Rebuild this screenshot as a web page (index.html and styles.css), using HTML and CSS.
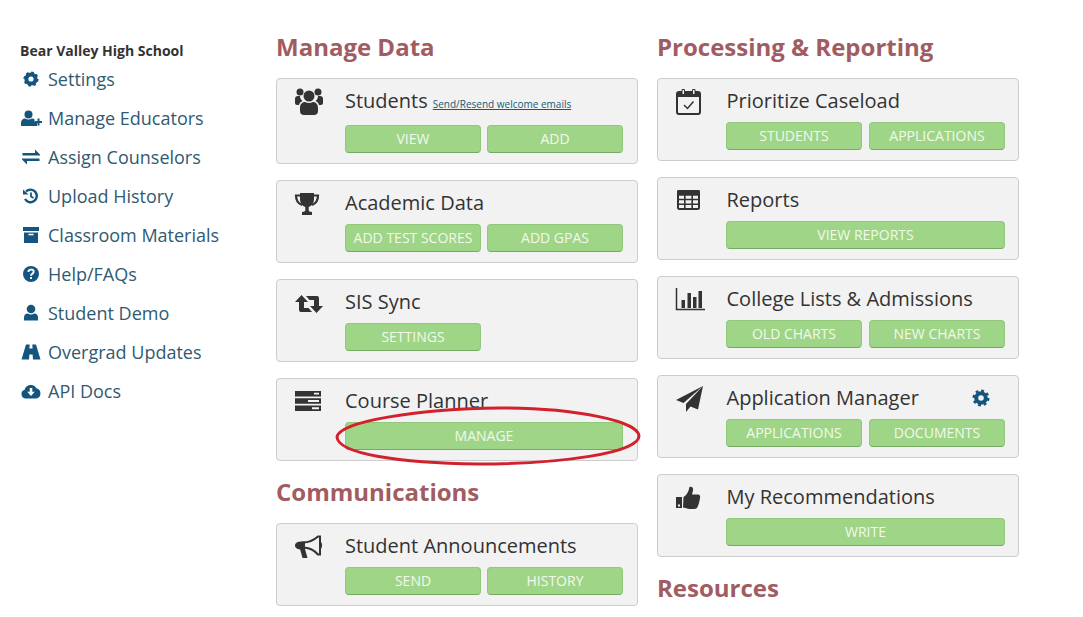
FILE: index.html
```html
<!DOCTYPE html>
<html lang="en">
<head>
  <meta charset="UTF-8">
  <title>Bear Valley High School</title>
  <link rel="stylesheet" href="styles.css">
</head>
<body>

  <div class="page">

    <div class="sidebar">
      <div class="school">Bear Valley High School</div>

      <a class="nav-item" href="#">
        <svg class="nav-icon" viewBox="0 0 22 20"><circle cx="11" cy="10" r="4.6" fill="none" stroke="currentColor" stroke-width="4"/><circle cx="11" cy="10" r="6.6" fill="none" stroke="currentColor" stroke-width="2" stroke-dasharray="2.6 2.58"/></svg>
        Settings
      </a>
      <a class="nav-item" href="#">
        <svg class="nav-icon" viewBox="0 0 22 20"><circle cx="8.5" cy="6.5" r="4"/><path d="M1 18v-3c0-3 2-4.500 4-4.500 2 1.300 5 1.300 7 0 1 0 2 .4 2.600 1v2.500h2.400V18z"/><path d="M15 14h7M18.500 10.500v7" fill="none" stroke="currentColor" stroke-width="2"/></svg>
        Manage Educators
      </a>
      <a class="nav-item" href="#">
        <svg class="nav-icon" viewBox="0 0 22 20"><path d="M2.500 6h12.500V2.500L20 7.500v1H2.500zM19.500 11.500v2.500H7v3.500L2 12.500v-1z"/></svg>
        Assign Counselors
      </a>
      <a class="nav-item" href="#">
        <svg class="nav-icon" viewBox="0 0 22 20"><path d="M6 5.500A6.300 6.300 0 1 1 5 13" fill="none" stroke="currentColor" stroke-width="2.400"/><path d="M3 3.500l5.500 5H3z"/><path d="M11 6.500v4l2.500 1.500" fill="none" stroke="currentColor" stroke-width="1.800"/></svg>
        Upload History
      </a>
      <a class="nav-item" href="#">
        <svg class="nav-icon" viewBox="0 0 22 20"><path d="M3 2h16v4H3zM4 7.500h14V18H4z"/><path d="M8.500 9.500h5" stroke="#fff" stroke-width="1.600"/></svg>
        Classroom Materials
      </a>
      <a class="nav-item" href="#">
        <svg class="nav-icon" viewBox="0 0 22 20"><circle cx="11" cy="10" r="8"/><path d="M8.300 8c.2-3.200 5.400-3.200 5.400-.2 0 2-2.700 2-2.700 4" fill="none" stroke="#fff" stroke-width="1.900"/><path d="M10 13h2v2h-2z" fill="#fff"/></svg>
        Help/FAQs
      </a>
      <a class="nav-item" href="#">
        <svg class="nav-icon" viewBox="0 0 22 20"><circle cx="11" cy="6" r="4.300"/><path d="M4 17.500v-3c0-2.500 1.700-4 3.700-4 2 1.300 4.600 1.300 6.600 0 2 0 3.700 1.500 3.700 4v3z"/></svg>
        Student Demo
      </a>
      <a class="nav-item" href="#">
        <svg class="nav-icon" viewBox="0 0 22 20"><path d="M6 2.500h3.700l-.3 4h3.200l-.3-4H16L20.500 17.500H13l-.4-5H9.400L9 17.500H1.500z"/></svg>
        Overgrad Updates
      </a>
      <a class="nav-item" href="#">
        <svg class="nav-icon" viewBox="0 0 22 20"><path d="M6 17.500a4.500 4.500 0 0 1-1.300-8.800A6.300 6.300 0 0 1 16.300 7.200 5.300 5.300 0 0 1 16.500 17.500z"/><path d="M9.700 7h2.600v3.800h2.500L11 15l-3.800-4.200h2.500z" fill="#fff"/></svg>
        API Docs
      </a>
    </div>

    <div class="column">
      <h2>Manage Data</h2>

      <div class="card">
        <svg class="card-icon" viewBox="0 0 30 30"><circle cx="15" cy="9" r="5.500"/><circle cx="6" cy="5" r="3.500"/><circle cx="24" cy="5" r="3.500"/><path d="M1 16v-4c0-2 1-3 3-3h2c0 2 1 4 2.500 5-2 .8-3 2-3.500 4H3c-1 0-2-1-2-2zM29 16v-4c0-2-1-3-3-3h-2c0 2-1 4-2.500 5 2 .8 3 2 3.500 4h2c1 0 2-1 2-2z"/><path d="M6 24v-3c0-3.500 2-6 5-6 2.500 1.400 5.500 1.400 8 0 3 0 5 2.500 5 6v3c0 2.500-1.500 4-4 4H10c-2.500 0-4-1.500-4-4z"/></svg>
        <div class="card-body">
          <div class="card-head tall">
            <span class="card-title">Students</span>
            <a class="small-link" href="#">Send/Resend welcome emails</a>
          </div>
          <div class="buttons">
            <a class="btn" href="#">VIEW</a>
            <a class="btn" href="#">ADD</a>
          </div>
        </div>
      </div>

      <div class="card">
        <svg class="card-icon" viewBox="0 0 30 30"><path d="M6 4h14v6c0 4.500-2.500 7-5.300 8v3.500c0 .8 1.500 1.300 3.300 1.500v3H8v-3c1.800-.2 3.300-.7 3.300-1.500V18C8.500 17 6 14.500 6 10z"/><path d="M6.500 6.500H2c0 5 2 8 6 9.500M19.500 6.500H24c0 5-2 8-6 9.500" fill="none" stroke="currentColor" stroke-width="2.200"/></svg>
        <div class="card-body">
          <div class="card-head">
            <span class="card-title">Academic Data</span>
          </div>
          <div class="buttons">
            <a class="btn" href="#">ADD TEST SCORES</a>
            <a class="btn" href="#">ADD GPAS</a>
          </div>
        </div>
      </div>

      <div class="card">
        <svg class="card-icon" viewBox="0 0 30 30"><path d="M7.500 7L14 14H10V20H14.500L18 24H7Q5 24 5 22V14H1Z"/><path d="M12 8H23Q25 8 25 10V18H29L22.500 25L16 18H20V12H15.500Z"/></svg>
        <div class="card-body">
          <div class="card-head">
            <span class="card-title">SIS Sync</span>
          </div>
          <div class="buttons">
            <a class="btn" href="#">SETTINGS</a>
            <span></span>
          </div>
        </div>
      </div>

      <div class="card">
        <svg class="card-icon" viewBox="0 0 30 30"><path d="M1 4h26v5.500H1zM1 11.200h26v5.600H1zM1 18.500h26V24H1z"/><path d="M20 5.800h5v1.800h-5zM14 13h11v2H14zM18 20.300h7v1.900h-7z" fill="#f2f2f2"/></svg>
        <div class="card-body">
          <div class="card-head">
            <span class="card-title">Course Planner</span>
          </div>
          <div class="buttons">
            <a class="btn wide" href="#">MANAGE</a>
          </div>
        </div>
        <svg class="circled" viewBox="0 0 308 63"><path d="M2 33C4 17 85 5 165 4C240 4 304 17 304 32C304 49 225 60 143 60C65 59 3 50 2 33Z"/></svg>
      </div>

      <h2 class="section-gap">Communications</h2>

      <div class="card">
        <svg class="card-icon" viewBox="0 0 30 30"><path d="M24 4.500l2 0v18l-2 0C20 18 15 15.500 9 15.500v-5C15 10.500 20 8 24 4.500z" fill="none" stroke="currentColor" stroke-width="2"/><path d="M8 9.500h3v8H8c-4.500 0-7-1.500-7-4s2.500-4 7-4z"/><path d="M6 17h5l2.500 9H8.500z"/><path d="M26 10.500c1.500.5 1.500 5 0 5.500" fill="none" stroke="currentColor" stroke-width="2"/></svg>
        <div class="card-body">
          <div class="card-head">
            <span class="card-title">Student Announcements</span>
          </div>
          <div class="buttons">
            <a class="btn" href="#">SEND</a>
            <a class="btn" href="#">HISTORY</a>
          </div>
        </div>
      </div>
    </div>

    <div class="column right">
      <h2>Processing &amp; Reporting</h2>

      <div class="card">
        <svg class="card-icon" viewBox="0 0 30 30"><rect x="2" y="5" width="23" height="22" rx="2" fill="none" stroke="currentColor" stroke-width="2"/><path d="M2 6h23v4H2z"/><path d="M7 2.500h2.500v5H7zM17.500 2.500H20v5h-2.500z" fill="#f2f2f2" stroke="currentColor" stroke-width="1"/><path d="M9 18l3.500 3.500 6-7" fill="none" stroke="currentColor" stroke-width="1.500"/></svg>
        <div class="card-body">
          <div class="card-head">
            <span class="card-title">Prioritize Caseload</span>
          </div>
          <div class="buttons">
            <a class="btn" href="#">STUDENTS</a>
            <a class="btn" href="#">APPLICATIONS</a>
          </div>
        </div>
      </div>

      <div class="card">
        <svg class="card-icon" viewBox="0 0 30 30"><rect x="3" y="5" width="21" height="18" rx="1.500" fill="none" stroke="currentColor" stroke-width="2"/><path d="M3 5h21v4H3zM3 13.500h21M3 18.300h21M9.800 9v14M17.200 9v14" fill="currentColor" stroke="currentColor" stroke-width="1.600"/></svg>
        <div class="card-body">
          <div class="card-head">
            <span class="card-title">Reports</span>
          </div>
          <div class="buttons">
            <a class="btn wide" href="#">VIEW REPORTS</a>
          </div>
        </div>
      </div>

      <div class="card">
        <svg class="card-icon" viewBox="0 0 30 30"><path d="M1.500 3v21.500H30.500" fill="none" stroke="currentColor" stroke-width="1.500"/><path d="M6.500 15h3.500v8H6.500zM12.500 8h3.500v15h-3.500zM18 12h3.500v11H18zM23.500 6H27v17h-3.500z"/></svg>
        <div class="card-body">
          <div class="card-head">
            <span class="card-title">College Lists &amp; Admissions</span>
          </div>
          <div class="buttons">
            <a class="btn" href="#">OLD CHARTS</a>
            <a class="btn" href="#">NEW CHARTS</a>
          </div>
        </div>
      </div>

      <div class="card">
        <svg class="card-icon" viewBox="0 0 30 30"><path d="M28 2L1 16l7.500 3zM28 2L11 20v8l4.500-5.500 7.500 3z"/></svg>
        <div class="card-body">
          <div class="card-head">
            <span class="card-title">Application Manager</span>
            <svg class="head-gear" viewBox="0 0 18 18"><circle cx="9" cy="9" r="4.800" fill="none" stroke="currentColor" stroke-width="4"/><circle cx="9" cy="9" r="7.300" fill="none" stroke="currentColor" stroke-width="2.400" stroke-dasharray="2.860 2.870"/></svg>
          </div>
          <div class="buttons">
            <a class="btn" href="#">APPLICATIONS</a>
            <a class="btn" href="#">DOCUMENTS</a>
          </div>
        </div>
      </div>

      <div class="card">
        <svg class="card-icon" viewBox="0 0 30 30"><path d="M1 14h6v11H1z"/><path d="M3 21.500h2v2H3z" fill="#f2f2f2"/><path d="M8.500 14c3-1.500 5-5 6-10 2.500-1 4 1 3.500 3.500L17 11.500h6c2 0 2.500 2 2 3.500-.5 4-1.500 7-2.500 9-.5 1.300-1.500 2-3 2h-5c-2.500 0-4-1.500-6.500-1.500z"/></svg>
        <div class="card-body">
          <div class="card-head">
            <span class="card-title">My Recommendations</span>
          </div>
          <div class="buttons">
            <a class="btn wide" href="#">WRITE</a>
          </div>
        </div>
      </div>

      <h2 class="section-gap">Resources</h2>
    </div>

  </div>

</body>
</html>
```

FILE: styles.css
```css
body {
  margin: 0;
  background: #ffffff;
  font-family: "Open Sans", sans-serif;
  color: #333333;
  overflow: hidden;
}

a {
  text-decoration: none;
}

.page {
  display: flex;
  padding: 31px 0 0 20px;
}

.sidebar {
  width: 256px;
  flex-shrink: 0;
}

.school {
  margin-top: 11px;
  font-size: 14px;
  font-weight: 700;
  line-height: 17px;
  color: #333333;
}

.nav-item {
  display: flex;
  align-items: center;
  gap: 6px;
  height: 39px;
  font-size: 18px;
  color: #2f5a73;
}

.nav-icon {
  width: 22px;
  height: 20px;
  flex-shrink: 0;
  fill: #14557f;
  color: #14557f;
}

.column {
  width: 362px;
  flex-shrink: 0;
}

.column.right {
  margin-left: 19px;
}

h2 {
  margin: 0 0 15px;
  font-size: 24px;
  font-weight: 700;
  line-height: 32px;
  color: #a15c62;
}

h2.section-gap {
  margin-top: -1px;
}

.card {
  position: relative;
  display: flex;
  margin-bottom: 16px;
  padding: 7px 14px 10px 17px;
  background: #f2f2f2;
  border: 1px solid #cccccc;
  border-radius: 4px;
}

.right .card {
  padding-right: 13px;
}

.card-icon {
  width: 30px;
  height: 30px;
  margin: 1px 21px 0 0;
  flex-shrink: 0;
  fill: #333333;
  color: #333333;
}

.card-body {
  flex: 1;
  min-width: 0;
}

.card-head {
  display: flex;
  align-items: baseline;
  height: 30px;
  margin-bottom: 6px;
}

.card-head.tall {
  margin-bottom: 9px;
}

.card-title {
  font-size: 20px;
  line-height: 30px;
  color: #333333;
}

.right .card-title {
  margin-left: 0.5px;
}

.small-link {
  margin-left: 5px;
  font-size: 10px;
  color: #155a78;
  text-decoration: underline;
}

.head-gear {
  align-self: center;
  width: 18px;
  height: 18px;
  margin: 0 15px 0 auto;
  color: #14557f;
}

.buttons {
  display: grid;
  grid-template-columns: 1fr 1fr;
  gap: 6px;
}

.right .buttons {
  gap: 7px;
}

.btn {
  display: block;
  height: 28px;
  line-height: 26px;
  box-sizing: border-box;
  text-align: center;
  font-size: 14px;
  color: #f2f9ec;
  background: #9fd587;
  border-radius: 4px;
  border: 1px solid #93c77c;
  border-bottom-color: #78a964;
}

.btn.wide {
  grid-column: 1 / 3;
}

.circled {
  position: absolute;
  left: 58px;
  top: 25px;
  width: 308px;
  height: 63px;
  overflow: visible;
}

.circled path {
  fill: none;
  stroke: #d2202c;
  stroke-width: 3;
}
```
